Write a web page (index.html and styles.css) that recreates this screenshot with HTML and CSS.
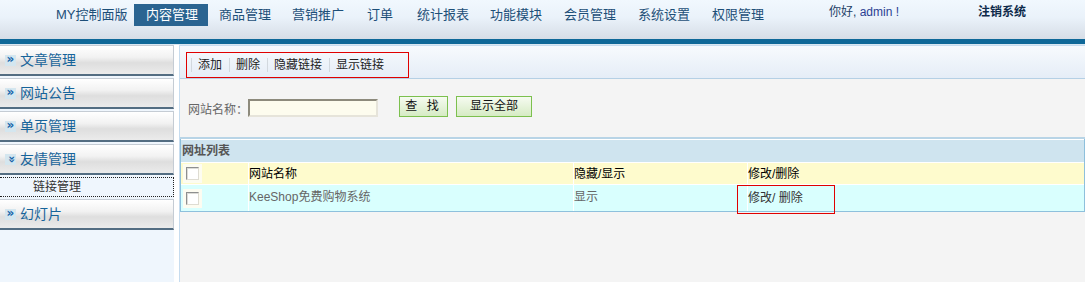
FILE: index.html
```html
<!DOCTYPE html>
<html>
<head>
<meta charset="utf-8">
<link rel="stylesheet" href="styles.css">
</head>
<body>
<div class="header">
  <ul class="nav">
    <li class="nav-item my">MY控制面版</li>
    <li class="nav-item active">内容管理</li>
    <li class="nav-item">商品管理</li>
    <li class="nav-item w75">营销推广</li>
    <li class="nav-item short">订单</li>
    <li class="nav-item">统计报表</li>
    <li class="nav-item w74">功能模块</li>
    <li class="nav-item w74">会员管理</li>
    <li class="nav-item w74">系统设置</li>
    <li class="nav-item">权限管理</li>
  </ul>
  <div class="hello">你好, <span class="admin">admin !</span></div>
  <div class="logout">注销系统</div>
</div>
<div class="bluebar"></div>
<div class="layout">
  <div class="sidebar">
    <div class="side-item"><span class="ico">»</span>文章管理</div>
    <div class="side-item"><span class="ico">»</span>网站公告</div>
    <div class="side-item"><span class="ico">»</span>单页管理</div>
    <div class="side-item"><span class="ico down">»</span>友情管理</div>
    <div class="side-sub">链接管理</div>
    <div class="side-item"><span class="ico">»</span>幻灯片</div>
  </div>
  <div class="main">
    <div class="toolbar">
      <div class="tools">
        <span class="tool">添加</span>
        <span class="tool">删除</span>
        <span class="tool">隐藏链接</span>
        <span class="tool">显示链接</span>
      </div>
    </div>
    <div class="search">
      <span class="label">网站名称：</span>
      <span class="input"></span>
      <span class="btn find">查 找</span>
      <span class="btn all">显示全部</span>
    </div>
    <div class="table">
      <div class="caption">网址列表</div>
      <div class="row head">
        <div class="c-check"><span class="cb"></span></div>
        <div class="c-name">网站名称</div>
        <div class="c-hide">隐藏/显示</div>
        <div class="c-edit">修改/删除</div>
      </div>
      <div class="row body">
        <div class="c-check"><span class="cb"></span></div>
        <div class="c-name">KeeShop免费购物系统</div>
        <div class="c-hide">显示</div>
        <div class="c-edit"><span class="edit-box">修改/ 删除</span></div>
      </div>
    </div>
  </div>
</div>
</body>
</html>
```
FILE: styles.css
```css
* { box-sizing: border-box; }
html, body { margin: 0; padding: 0; }
body {
  width: 1085px;
  height: 282px;
  overflow: hidden;
  font-family: "Liberation Sans", "Noto Sans CJK SC", sans-serif;
  font-size: 12px;
  background: #f4f4f4;
}
.header {
  height: 39px;
  background: linear-gradient(#f1f8fe 0%, #eaf2fa 45%, #d6dde6 100%);
  display: flex;
  position: relative;
}
.nav {
  list-style: none;
  margin: 0;
  padding: 0 0 0 56px;
  display: flex;
  height: 26px;
  margin-top: 4px;
}
.nav-item {
  font-size: 13px;
  color: #1d4f78;
  height: 22px;
  line-height: 22px;
  width: 73px;
  flex: none;
  text-align: left;
  white-space: nowrap;
}
.nav-item.w75 { width: 75px; }
.nav-item.w74 { width: 74px; }
.nav-item.my { width: 78px; }
.nav-item.short { width: 50px; }
.nav-item.active {
  background: #2a6491;
  color: #fff;
  width: 74px;
  padding-left: 12px;
  margin-right: 11px;
}
.hello {
  position: absolute;
  left: 829px;
  top: 2px;
  font-size: 12px;
  color: #1d3f66;
}
.admin { color: #2b3f93; }
.logout {
  position: absolute;
  left: 978px;
  top: 2px;
  font-size: 12px;
  font-weight: bold;
  color: #0d2a4a;
}
.bluebar {
  height: 6px;
  background: #0f6898;
  border-bottom: 1px solid #d8e6f1;
}
.layout {
  display: flex;
  gap: 5px;
  background: #fff;
  height: 237px;
}
.sidebar {
  width: 174px;
  background: #eff6fd;
}
.side-item {
  height: 31px;
  margin-top: 2px;
  border: 1px solid #c5ccd4;
  border-left: none;
  border-bottom: 2px solid #536d82;
  background: linear-gradient(#ffffff 0%, #f2f2f2 40%, #dedede 60%, #ebebeb 100%);
  color: #17649a;
  font-size: 14px;
  line-height: 27px;
  padding-left: 5px;
  display: flex;
  align-items: center;
  gap: 4px;
}
.sidebar .side-item:first-child { margin-top: 0; }
.ico {
  display: inline-block;
  width: 11px;
  height: 11px;
  background: #d4e6ef;
  color: #1563a8;
  font-size: 12px;
  font-weight: bold;
  line-height: 9px;
  text-align: center;
  font-family: "DejaVu Sans", sans-serif;
}
.ico.down { transform: rotate(90deg); }
.side-sub {
  margin-top: 2px;
  height: 20px;
  border: 1px dotted #222;
  border-left: none;
  background: #eff6fd;
  color: #333;
  font-size: 12px;
  line-height: 18px;
  padding-left: 33px;
}
.main {
  flex: 1;
  border-left: 1px solid #c6dcef;
  background: #f4f4f4;
}
.toolbar {
  height: 34px;
  background: linear-gradient(#f7fafd, #e5edf7);
  border-top: 1px solid #c6dcef;
  border-bottom: 1px solid #b5d0e5;
  padding: 6px 0 0 6px;
}
.tools {
  display: inline-flex;
  align-items: center;
  width: 223px;
  height: 26px;
  border: 1px solid #e00000;
  padding-left: 4px;
}
.tool {
  color: #222;
  padding: 0 7px 0 6px;
  border-left: 1px solid #d2d8de;
  line-height: 14px;
}
.search {
  height: 60px;
  display: flex;
  align-items: center;
  padding-left: 8px;
  padding-top: 0;
  border-bottom: 2px solid #b8d4e6;
}
.label { color: #666; font-size: 12px; }
.input {
  width: 130px;
  height: 18px;
  background: #fdfcee;
  border: 2px solid #8d8a7c;
  border-right-color: #e6e4da;
  border-bottom-color: #e6e4da;
  margin-right: 21px;
}
.btn {
  height: 21px;
  border: 1px solid #7cc04e;
  background: linear-gradient(#f6fbf1, #d6ebc4);
  color: #111;
  font-size: 12px;
  line-height: 19px;
  text-align: center;
  margin-top: -4px;
}
.find { width: 49px; margin-right: 8px; letter-spacing: 3px; }
.all { width: 76px; }
.table {
  border: 1px solid #8ec0dc;
  border-top: none;
  background: #fff;
}
.caption {
  height: 23px;
  background: #cfe4ef;
  border-top: 1px solid #fff;
  font-weight: bold;
  color: #555;
  line-height: 22px;
  padding-left: 1px;
}
.row {
  display: flex;
  border-top: 1px solid #fff;
}
.row.head { height: 22px; background: #fefbcd; color: #000; }
.row.body { height: 27px; background: #d9fffe; color: #666; }
.row > div { line-height: 22px; border-left: 1px solid #fff; }
.row.body > div { line-height: 24px; }
.c-check { width: 67px; border-left: none !important; padding-left: 5px; display: flex; align-items: center; }
.c-name { width: 325px; padding-left: 0; }
.c-hide { width: 174px; padding-left: 0; }
.c-edit { flex: 1; padding-left: 0; }
.row.body .c-edit { color: #333; }
.cb {
  display: inline-block;
  width: 13px;
  height: 13px;
  background: #fff;
  border: 1px solid #8e8f8f;
  border-right-color: #dedcd2;
  border-bottom-color: #dedcd2;
  box-shadow: inset 1px 1px 0 #dcdcd7;
  outline: 3px solid #fdfcf1;
}
.edit-box {
  display: inline-block;
  border: 1px solid #e00000;
  height: 29px;
  width: 98px;
  margin-left: -11px;
  padding-left: 10px;
  line-height: 24px;
}
```
